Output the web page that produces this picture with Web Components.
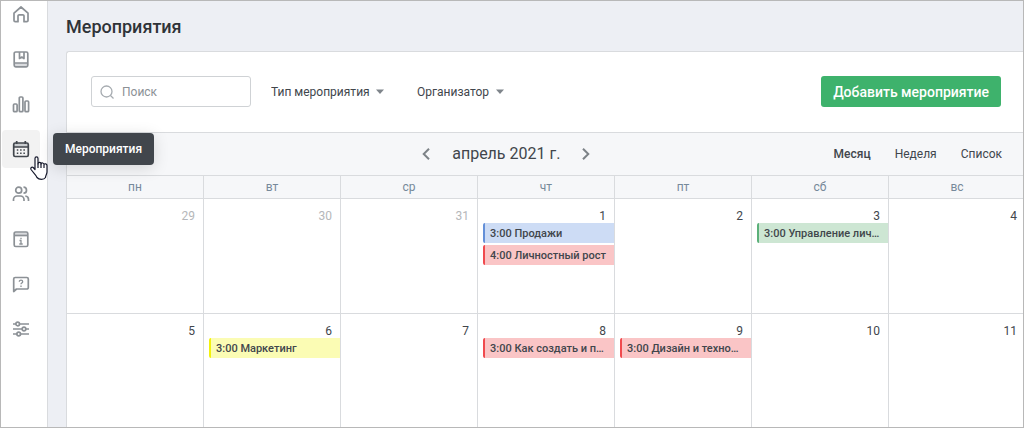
<!DOCTYPE html>
<html lang="ru">
<head>
<meta charset="utf-8">
<meta name="viewport" content="width=device-width, initial-scale=1">
<title>Мероприятия</title>
<style>
  body {
    margin: 0;
    font-family: Roboto, "Noto Sans", sans-serif;
    font-size: 12px;
    color: #41464c;
    --line: #d9dbde;
    --muted: #8c9196;
    --panel: #f6f7f9;
  }
</style>
</head>
<body>

<app-shell>
  <side-nav slot="nav"></side-nav>
  <span slot="title">Мероприятия</span>
  <filter-bar>
    <search-box placeholder="Поиск"></search-box>
    <filter-select label="Тип мероприятия"></filter-select>
    <filter-select label="Организатор"></filter-select>
    <add-button slot="action">Добавить мероприятие</add-button>
  </filter-bar>
  <calendar-header month="апрель 2021 г."></calendar-header>
  <month-calendar></month-calendar>
</app-shell>

<script>
const render = (element, html) => {
  const template = document.createElement('template');
  template.innerHTML = html;
  const shadow = element.attachShadow({ mode: 'open' });
  shadow.appendChild(template.content.cloneNode(true));
  return shadow;
};

class AppShell extends HTMLElement {
  constructor() {
    super();
    render(this, `<style>
      :host {
        display: flex;
        box-sizing: border-box;
        height: 100vh;
        border: 1px solid #b8b8b8;
        background: #edeff4;
        overflow: hidden;
      }

      main {
        flex: 1;
        min-width: 0;
        padding-left: 18px;
      }

      h1 {
        margin: 0;
        padding-top: 2px;
        font-size: 18px;
        font-weight: 500;
        line-height: 48px;
        color: #2f3338;
      }

      /* the card runs slightly past the right edge of the window */
      .card {
        margin-right: -3px;
        background: #fff;
        border: 1px solid var(--line);
        border-right: 0;
        border-top-left-radius: 3px;
      }
    </style>
    <slot name="nav"></slot>
    <main>
      <h1><slot name="title"></slot></h1>
      <div class="card"><slot></slot></div>
    </main>`);
  }
}

const icons = {
  home: '<path d="M2 8.2 9 2l7 6.200V15.500a1.200 1.200 0 0 1-1.200 1.200H12V11a1.200 1.200 0 0 0-1.200-1.200H7.200A1.200 1.200 0 0 0 6 11v5.700H3.200A1.200 1.200 0 0 1 2 15.500z"/>',
  book: '<path d="M2.500 13h13v3.500h-13z" fill="#d9dbde" stroke="none"/><rect x="2.200" y="2" width="13.600" height="14.800" rx="1.500"/><path d="M2.200 13h13.600M7.500 2v6.500L9.800 7l2.200 1.500V2"/>',
  chart: '<rect x="1.500" y="9" width="3.600" height="7.700" rx="1"/><rect x="7.300" y="2" width="3.600" height="14.700" rx="1"/><rect x="13" y="6" width="3.600" height="10.700" rx="1"/>',
  calendar: '<path d="M2 3h14v4H2z" fill="#c9cccf" stroke="none"/><rect x="1.700" y="3" width="14.600" height="13.500" rx="1.500"/><path d="M1.700 7h14.600M4.700 1v3M13.300 1v3"/><path d="M4.800 10h8.500M4.800 13.300h8.500" stroke-width="1.600" stroke-dasharray="1.500 1.800"/>',
  users: '<circle cx="6.700" cy="5.200" r="3"/><path d="M11.500 2.200a3 3 0 0 1 0 6M1.500 16v-1.500a3.500 3.500 0 0 1 3.500-3.500h3.500a3.500 3.500 0 0 1 3.500 3.500V16M13.300 11a3.500 3.500 0 0 1 3.200 3.500V16"/>',
  info: '<path d="M2.500 2.500h13v3h-13z" fill="#d9dbde" stroke="none"/><rect x="2.200" y="2" width="13.600" height="14.500" rx="1.500"/><path d="M2.200 5.500h13.600"/><path d="M9 7.700v1.500M7.500 10.500H9V14M7.300 14h3.400" stroke-width="1.300"/>',
  help: '<path d="M1.700 16.500V4a1.500 1.500 0 0 1 1.500-1.500h11.600A1.500 1.500 0 0 1 16.300 4v8.500a1.500 1.500 0 0 1-1.500 1.500H4.500z"/><path d="M7.300 6.700c0-2 3.400-2 3.400 0C10.700 8 9 8 9 9.200M9 10.500v1.400" stroke-width="1.300"/>',
  settings: '<path d="M1 4h3M7.500 4H17M1 9h9M14 9h3M1 14h4M8.500 14H17"/><circle cx="5.700" cy="4" r="1.800"/><circle cx="12" cy="9" r="1.800"/><circle cx="6.700" cy="14" r="1.800"/>'
};

class NavItem extends HTMLElement {
  constructor() {
    super();

    const icon = this.getAttribute('icon');
    const label = this.getAttribute('label');

    render(this, `<style>
      :host {
        display: block;
        color: var(--muted);
      }

      :host([active]) {
        color: #41464c;
      }

      a {
        display: grid;
        place-items: center;
        width: 38px;
        height: 38px;
        border-radius: 4px;
        color: inherit;
      }

      :host([active]) a {
        background: #f2f2f2;
      }

      svg {
        width: 18px;
        height: 18px;
        fill: none;
        stroke: currentColor;
        stroke-width: 1.7;
        stroke-linejoin: round;
      }
    </style>
    <a href="#${icon}" aria-label="${label}"><svg viewBox="0 0 18 18" aria-hidden="true">${icons[icon]}</svg></a>`);
  }
}

class NavTooltip extends HTMLElement {
  constructor() {
    super();
    render(this, `<style>
      :host {
        position: absolute;
        left: 52px;
        top: 132px;
        z-index: 2;
        padding: 0 12px;
        border-radius: 4px;
        background: #41464c;
        box-shadow: 0 3px 16px rgba(0, 0, 0, 0.14);
        color: #fff;
        font-weight: 500;
        line-height: 32px;
        white-space: nowrap;
      }
    </style>
    <slot></slot>`);
  }
}

class HandPointer extends HTMLElement {
  constructor() {
    super();
    render(this, `<style>
      :host {
        position: absolute;
        left: 28px;
        top: 155px;
        z-index: 3;
        pointer-events: none;
      }

      svg {
        display: block;
      }
    </style>
    <svg width="20" height="25" viewBox="0 0 20 25" fill="#fff" stroke="#15182b" stroke-width="1.2" stroke-linejoin="round" aria-hidden="true">
      <path d="M6 13.500V2.500C6 .3 9 .3 9 2.500V7.800C9.300 5.800 12 6 12 8c.4-1.500 3-1.400 3 .6.600-1.400 3-1 3 1V16c0 2-1.500 3.500-1.500 5.500-1.500 2.400-6.500 2.400-8.500 0-.8-2.500-3.500-4.500-6-8-.8-1.600.8-3 2.200-2z"/>
      <path d="M9 7.500v4.500M12 8v4M15 9v3" fill="none"/>
    </svg>`);
  }
}

class SideNav extends HTMLElement {
  constructor() {
    super();
    render(this, `<style>
      :host {
        display: block;
        position: relative;
        flex: none;
        padding: 0 7px 0 1px;
        background: #fff;
        border-right: 1px solid var(--line);
      }

      /* the list is scrolled a little under the top edge */
      nav {
        display: grid;
        gap: 7px;
        margin-top: -6px;
      }
    </style>
    <nav>
      <nav-item icon="home" label="Главная"></nav-item>
      <nav-item icon="book" label="Материалы"></nav-item>
      <nav-item icon="chart" label="Отчёты"></nav-item>
      <nav-item icon="calendar" label="Мероприятия" active></nav-item>
      <nav-item icon="users" label="Пользователи"></nav-item>
      <nav-item icon="info" label="Информация"></nav-item>
      <nav-item icon="help" label="Помощь"></nav-item>
      <nav-item icon="settings" label="Настройки"></nav-item>
    </nav>
    <nav-tooltip>Мероприятия</nav-tooltip>
    <hand-pointer></hand-pointer>`);
  }
}

class FilterBar extends HTMLElement {
  constructor() {
    super();
    render(this, `<style>
      :host {
        display: flex;
        align-items: center;
        justify-content: space-between;
        padding: 24px 25px 25px 24px;
      }

      .filters {
        display: flex;
        align-items: center;
        gap: 20px;
      }
    </style>
    <div class="filters"><slot></slot></div>
    <slot name="action"></slot>`);
  }
}

class SearchBox extends HTMLElement {
  constructor() {
    super();

    const placeholder = this.getAttribute('placeholder');

    render(this, `<style>
      :host {
        display: block;
      }

      label {
        display: flex;
        align-items: center;
        gap: 8px;
        box-sizing: border-box;
        width: 160px;
        height: 31px;
        padding: 0 8px;
        border: 1px solid #cfd2d5;
        border-radius: 3px;
      }

      svg {
        flex: none;
        fill: none;
        stroke: #a6abb0;
        stroke-width: 1.3;
      }

      input {
        flex: 1;
        min-width: 0;
        padding: 0;
        border: 0;
        outline: 0;
        background: none;
        font: inherit;
        color: inherit;
      }

      input::placeholder {
        color: var(--muted);
      }
    </style>
    <label>
      <svg width="14" height="14" viewBox="0 0 14 14" aria-hidden="true"><circle cx="6.5" cy="6.5" r="5.5"/><path d="m10.500 10.500 3 3"/></svg>
      <input type="search" placeholder="${placeholder}" aria-label="${placeholder}">
    </label>`);
  }
}

class FilterSelect extends HTMLElement {
  constructor() {
    super();

    const label = this.getAttribute('label');

    render(this, `<style>
      :host {
        display: flex;
        align-items: center;
        gap: 6px;
        padding-right: 13px;
      }

      select {
        appearance: none;
        margin: 0;
        padding: 0;
        border: 0;
        background: none;
        font: inherit;
        color: inherit;
        cursor: pointer;
      }

      svg {
        fill: #7f858b;
        pointer-events: none;
      }
    </style>
    <select aria-label="${label}"><option>${label}</option></select>
    <svg width="8" height="5" viewBox="0 0 8 5" aria-hidden="true"><path d="M0 .5h8l-4 4.500z"/></svg>`);
  }
}

class AddButton extends HTMLElement {
  constructor() {
    super();
    render(this, `<style>
      :host {
        display: block;
      }

      button {
        height: 31px;
        padding: 0 12px;
        border: 0;
        border-radius: 3px;
        background: #3eb26c;
        color: #fff;
        font: inherit;
        font-size: 14px;
        font-weight: 500;
        cursor: pointer;
      }
    </style>
    <button type="button"><slot></slot></button>`);
  }
}

class CalendarHeader extends HTMLElement {
  constructor() {
    super();
    render(this, `<style>
      :host {
        display: flex;
        align-items: center;
        justify-content: space-between;
        height: 42px;
        padding: 0 24px 0 112px;
        background: var(--panel);
        border: solid var(--line);
        border-width: 1px 0;
      }

      div {
        display: flex;
        align-items: center;
        gap: 24px;
      }

      .month {
        margin: 0 auto;
        gap: 22px;
      }

      h2 {
        margin: 0;
        padding-bottom: 2px;
        font-size: 16px;
        font-weight: 400;
      }

      button {
        padding: 0;
        border: 0;
        background: none;
        font: inherit;
        color: inherit;
        cursor: pointer;
      }

      .selected {
        font-weight: 500;
      }

      svg {
        display: block;
        fill: none;
        stroke: #7d8388;
        stroke-width: 2;
      }
    </style>
    <div class="month">
      <button type="button" aria-label="Предыдущий месяц"><svg width="8" height="12" viewBox="0 0 8 12"><path d="M7 .7 1.700 6 7 11.300"/></svg></button>
      <h2>${this.getAttribute('month')}</h2>
      <button type="button" aria-label="Следующий месяц"><svg width="8" height="12" viewBox="0 0 8 12"><path d="M1 .7 6.300 6 1 11.300"/></svg></button>
    </div>
    <div>
      <button type="button" class="selected">Месяц</button>
      <button type="button">Неделя</button>
      <button type="button">Список</button>
    </div>`);
  }
}

class CalendarEvent extends HTMLElement {
  constructor() {
    super();
    render(this, `<style>
      :host {
        display: block;
        margin: 0 0 2px 5px;
        padding: 2px 4px 0 5px;
        border-left: 2px solid var(--edge);
        border-radius: 2px 0 0 2px;
        background: var(--fill);
        font-size: 11px;
        font-weight: 500;
        line-height: 18px;
        white-space: nowrap;
        overflow: hidden;
        text-overflow: ellipsis;
      }

      :host([color="blue"]) { --edge: #6490d8; --fill: #cddcf5; }
      :host([color="red"]) { --edge: #f04a4e; --fill: #fac5c6; }
      :host([color="green"]) { --edge: #5bb079; --fill: #cde6d3; }
      :host([color="yellow"]) { --edge: #f2f20c; --fill: #fbfcb4; }
    </style>
    <slot></slot>`);
  }
}

const weekdays = ['пн', 'вт', 'ср', 'чт', 'пт', 'сб', 'вс'];
const weeks = [
  [29, 30, 31, 1, 2, 3, 4],
  [5, 6, 7, 8, 9, 10, 11]
];
const events = {
  1: [['blue', '3:00 Продажи'], ['red', '4:00 Личностный рост']],
  3: [['green', '3:00 Управление лич…']],
  6: [['yellow', '3:00 Маркетинг']],
  8: [['red', '3:00 Как создать и п…']],
  9: [['red', '3:00 Дизайн и техно…']]
};

class MonthCalendar extends HTMLElement {
  constructor() {
    super();

    const shadow = render(this, `<style>
      :host {
        display: block;
      }

      table {
        width: 100%;
        table-layout: fixed;
        border-collapse: separate;
        border-spacing: 0;
      }

      th, td {
        box-sizing: border-box;
        padding: 0;
        border: solid var(--line);
        border-width: 0 1px 1px 0;
      }

      th {
        height: 23px;
        background: var(--panel);
        color: #76899a;
        font-weight: 400;
      }

      td {
        height: 115px;
        vertical-align: top;
      }

      .day {
        padding: 10px 8px 0 0;
        line-height: 14px;
        text-align: right;
      }

      .other {
        color: #b5b7ba;
      }
    </style>
    <table>
      <thead><tr>${weekdays.map((name) => `<th scope="col">${name}</th>`).join('')}</tr></thead>
      <tbody></tbody>
    </table>`);

    const body = shadow.querySelector('tbody');

    weeks.forEach((week, index) => {
      const row = body.insertRow();

      week.forEach((number) => {
        const cell = row.insertCell();
        const other = index === 0 && number > 7;

        const day = document.createElement('div');
        day.classList.add('day');
        if (other) day.classList.add('other');
        day.textContent = number;
        cell.appendChild(day);

        if (other) return;
        (events[number] || []).forEach(([color, title]) => {
          cell.insertAdjacentHTML('beforeend', `<calendar-event color="${color}">${title}</calendar-event>`);
        });
      });
    });
  }
}

(() => {

  window.customElements.define('app-shell', AppShell);
  window.customElements.define('nav-item', NavItem);
  window.customElements.define('nav-tooltip', NavTooltip);
  window.customElements.define('hand-pointer', HandPointer);
  window.customElements.define('side-nav', SideNav);
  window.customElements.define('filter-bar', FilterBar);
  window.customElements.define('search-box', SearchBox);
  window.customElements.define('filter-select', FilterSelect);
  window.customElements.define('add-button', AddButton);
  window.customElements.define('calendar-header', CalendarHeader);
  window.customElements.define('calendar-event', CalendarEvent);
  window.customElements.define('month-calendar', MonthCalendar);

})();
</script>
</body>
</html>
